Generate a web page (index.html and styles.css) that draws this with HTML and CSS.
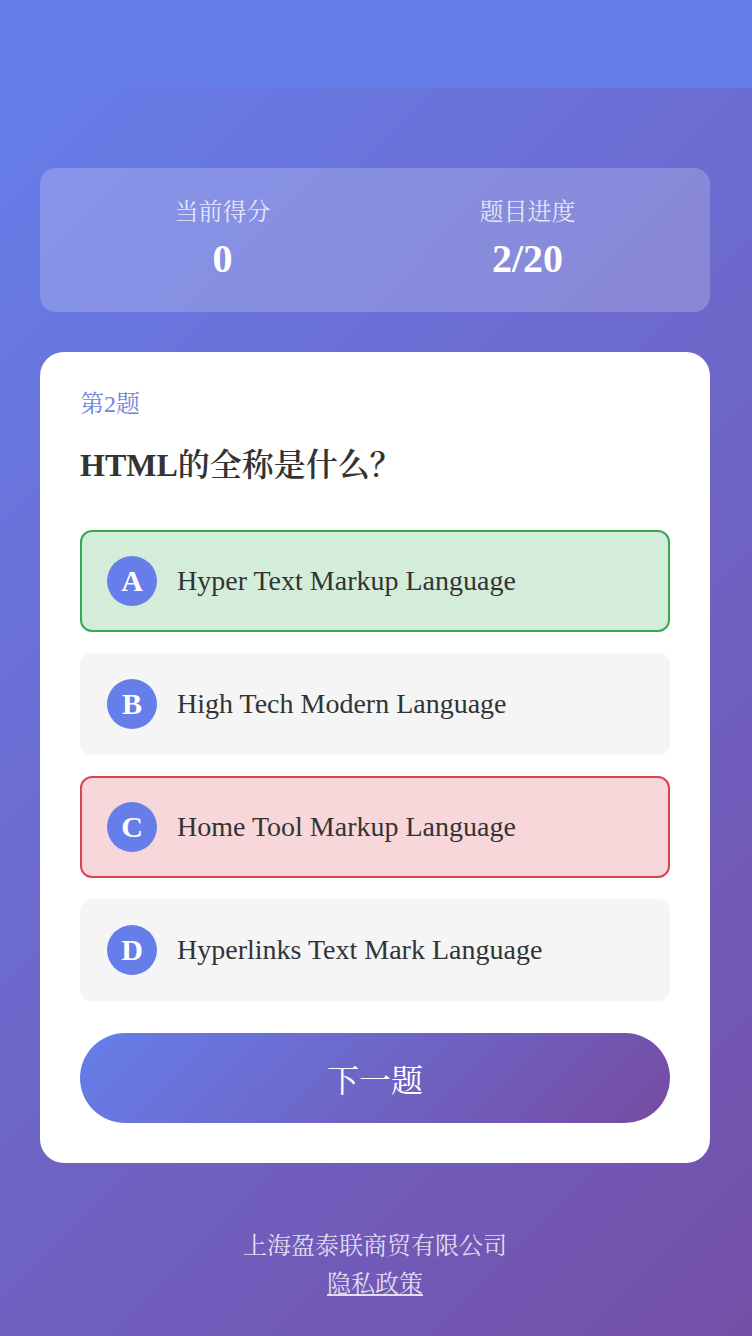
FILE: index.html
```html
<!DOCTYPE html>
<html lang="zh-CN">
<head>
<meta charset="utf-8">
<title>HTML知识问答</title>
<link rel="stylesheet" href="styles.css">
</head>
<body>
<div class="topbar"></div>
<main class="page">
  <section class="stats">
    <div class="stat">
      <div class="stat-label">当前得分</div>
      <div class="stat-value">0</div>
    </div>
    <div class="stat">
      <div class="stat-label">题目进度</div>
      <div class="stat-value">2/20</div>
    </div>
  </section>

  <section class="quiz">
    <div class="q-num">第2题</div>
    <h2 class="q-text">HTML<span class="q-cjk">的全称是什么？</span></h2>
    <div class="options">
      <div class="option correct"><span class="letter">A</span><span class="opt-text">Hyper Text Markup Language</span></div>
      <div class="option"><span class="letter">B</span><span class="opt-text">High Tech Modern Language</span></div>
      <div class="option wrong"><span class="letter">C</span><span class="opt-text">Home Tool Markup Language</span></div>
      <div class="option"><span class="letter">D</span><span class="opt-text">Hyperlinks Text Mark Language</span></div>
    </div>
    <button class="next">下一题</button>
  </section>

  <footer class="footer">
    <div class="company">上海盈泰联商贸有限公司</div>
    <a class="privacy" href="#">隐私政策</a>
  </footer>
</main>
</body>
</html>
```
FILE: styles.css
```css
html, body {
  margin: 0;
  padding: 0;
}
body {
  font-family: "Liberation Serif", "Noto Serif CJK SC", "Noto Serif SC", "Source Han Serif SC", "AR PL UMing CN", "Noto Sans CJK SC", serif;
  background: #667eea;
  color: #333;
}
.topbar {
  height: 88px;
  background: #667eea;
}
.page {
  background: linear-gradient(135deg, #667eea 0%, #764ba2 100%);
  padding: 80px 42px 210px 40px;
  box-sizing: border-box;
}
.stats {
  display: flex;
  background: rgba(255, 255, 255, 0.2);
  border-radius: 16px;
  padding: 31px 30px 0;
  height: 144px;
  box-sizing: border-box;
}
.stat {
  flex: 1;
  text-align: center;
  color: #fff;
}
.stat-label {
  font-size: 24px;
  line-height: 26px;
  color: rgba(255, 255, 255, 0.8);
}
.stat-value {
  font-size: 40px;
  font-weight: bold;
  line-height: 46px;
  margin-top: 11px;
}
.quiz {
  margin-top: 40px;
  background: #fff;
  border-radius: 24px;
  padding: 40px;
}
.q-num {
  font-size: 24px;
  line-height: 24px;
  color: #6f84e2;
}
.q-text {
  margin: 30px 0 46px;
  font-size: 32px;
  line-height: 38px;
  font-weight: bold;
  color: #333;
}
.q-cjk {
  font-weight: 600;
}
.options {
  display: flex;
  flex-direction: column;
  gap: 21px;
}
.option {
  display: flex;
  align-items: center;
  gap: 20px;
  padding: 24px 25px;
  background: #f5f5f5;
  border: 2px solid transparent;
  border-radius: 12px;
}
.option.correct {
  background: #d4edda;
  border-color: #34a853;
}
.option.wrong {
  background: #f8d7da;
  border-color: #d9444f;
}
.letter {
  width: 50px;
  height: 50px;
  flex: none;
  border-radius: 50%;
  background: #667eea;
  color: #fff;
  font-weight: bold;
  font-size: 30px;
  display: flex;
  align-items: center;
  justify-content: center;
}
.opt-text {
  font-size: 28px;
  color: #333;
}
.next {
  display: block;
  width: 100%;
  height: 90px;
  margin-top: 32px;
  border: none;
  border-radius: 45px;
  background: linear-gradient(135deg, #667eea 0%, #764ba2 100%);
  color: #fff;
  font-family: inherit;
  font-size: 32px;
}
.footer {
  margin-top: 64px;
  text-align: center;
  color: rgba(255, 255, 255, 0.8);
  font-size: 24px;
  line-height: 38px;
}
.company {
  display: block;
}
.privacy {
  color: rgba(255, 255, 255, 0.8);
  text-decoration: underline;
}
```
